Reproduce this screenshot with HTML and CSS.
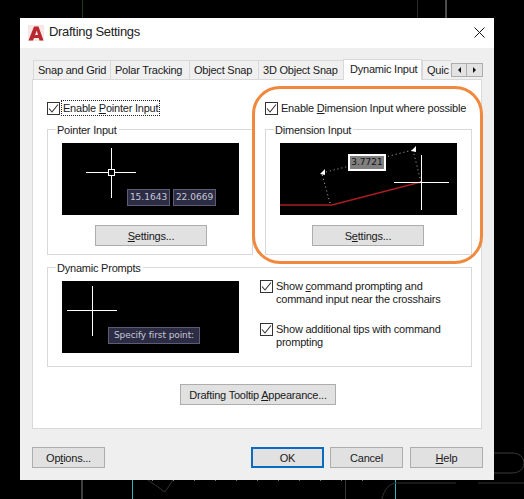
FILE: index.html
```html
<!DOCTYPE html>
<html lang="en">
<head>
    <meta charset="UTF-8">
    <meta name="viewport" content="width=device-width, initial-scale=1.0">
    <title>Drafting Settings</title>
    <link rel="stylesheet" href="styles.css">
</head>
<body>
    <!-- drawing behind the dialog -->
    <svg class="cad-lines" width="524" height="499" viewBox="0 0 524 499">
        <path d="M82.5 0V18" stroke="#1c3a1c" fill="none"/>
        <path d="M417.5 0V18" stroke="#2a2a2a" fill="none"/>
        <path d="M446 0V18" stroke="#666" stroke-width="1.5" fill="none"/>
        <path d="M82 480V499" stroke="#555" stroke-width="1.5" fill="none"/>
        <path d="M132.5 480V499" stroke="#2fb5b5" fill="none"/>
        <path d="M345.5 480V499" stroke="#333" fill="none"/>
        <path d="M395.5 480V499" stroke="#2fb5b5" fill="none"/>
        <path d="M148 480L165 492L173 480" stroke="#333" fill="none"/>
        <path d="M152 480.5H383" stroke="#777" stroke-dasharray="1 20" fill="none"/>
        <path d="M382 499C384 490 389 483 397 483H456M478 483H524" stroke="#333" fill="none"/>
        <path d="M494 453H512C519 453 524 457 524 463C524 469 519 473 512 473H494" stroke="#3a3a3a" fill="none"/>
    </svg>

    <div class="dialog">
        <div class="title-bar">
            <svg class="app-logo" width="16" height="16" viewBox="0 0 16 16">
                <rect width="16" height="16" fill="#f6e6e6"/>
                <path fill-rule="evenodd" d="M0.5 15.5L6 1.5H10.5L15.5 15.5H11.5L10.8 13H6L5 15.5ZM7 10H10L8.8 5.5Z" fill="#b8282e"/>
            </svg>
            <span class="title-text">Drafting Settings</span>
            <svg class="close-x" width="11" height="11" viewBox="0 0 11 11">
                <path d="M0.5 0.5L10.5 10.5M10.5 0.5L0.5 10.5" stroke="#111" fill="none"/>
            </svg>
        </div>

        <div class="tabs">
            <div class="tab tab-snap">Snap and Grid</div>
            <div class="tab tab-polar">Polar Tracking</div>
            <div class="tab tab-object">Object Snap</div>
            <div class="tab tab-3d">3D Object Snap</div>
            <div class="tab tab-dynamic active">Dynamic Input</div>
            <div class="tab tab-quick">Quic</div>
            <div class="tab-scroll">
                <div class="scroll-btn"><span class="arrow-left"></span></div>
                <div class="scroll-btn"><span class="arrow-right"></span></div>
            </div>
        </div>

        <div class="panel">
            <div class="top-row">
                <div class="column column-left">
                    <div class="check-row">
                        <span class="checkbox"><svg width="11" height="11" viewBox="0 0 11 11"><path d="M1 5.5L4 9L10 1.5" stroke="#333" stroke-width="1.1" fill="none"/></svg></span>
                        <span class="focus-label">Enable <u>P</u>ointer Input</span>
                    </div>
                    <div class="group group-pointer">
                        <span class="group-title">Pointer Input</span>
                        <div class="preview">
                            <svg width="177" height="72" viewBox="0 0 177 72">
                                <path d="M49.5 5V55M24 29.5H74" stroke="#fff" fill="none"/>
                                <rect x="46.5" y="26.5" width="6" height="6" fill="#000" stroke="#fff"/>
                            </svg>
                            <span class="coord coord-x">15.1643</span>
                            <span class="coord coord-y">22.0669</span>
                        </div>
                        <div class="btn btn-settings"><span><u>S</u>ettings...</span></div>
                    </div>
                </div>
                <div class="column column-right">
                    <div class="check-row">
                        <span class="checkbox"><svg width="11" height="11" viewBox="0 0 11 11"><path d="M1 5.5L4 9L10 1.5" stroke="#333" stroke-width="1.1" fill="none"/></svg></span>
                        <span class="plain-label">Enable <u>D</u>imension Input where possible</span>
                    </div>
                    <div class="group group-dimension">
                        <span class="group-title">Dimension Input</span>
                        <div class="preview">
                            <svg width="177" height="72" viewBox="0 0 177 72">
                                <path d="M0 62H52L141 39" stroke="#a81c22" stroke-width="1.5" fill="none"/>
                                <path d="M50 60L42 31M42 30L133 7M133 7L141 39" stroke="#bbb" stroke-dasharray="1 3" fill="none"/>
                                <path d="M40 31L45 26V32Z M131 8L136 3V9Z" fill="#fff"/>
                                <path d="M141.5 12V67M114 39.5H169" stroke="#fff" fill="none"/>
                            </svg>
                            <span class="dim-value">3.7721</span>
                        </div>
                        <div class="btn btn-settings"><span>S<u>e</u>ttings...</span></div>
                    </div>
                </div>
            </div>

            <div class="group group-prompts">
                <span class="group-title">Dynamic Prompts</span>
                <div class="preview">
                    <svg width="177" height="72" viewBox="0 0 177 72">
                        <path d="M30.5 5V55M5 29.5H55" stroke="#fff" fill="none"/>
                    </svg>
                    <span class="prompt-tip">Specify first point:</span>
                </div>
                <div class="prompt-options">
                    <div class="check-row top">
                        <span class="checkbox"><svg width="11" height="11" viewBox="0 0 11 11"><path d="M1 5.5L4 9L10 1.5" stroke="#333" stroke-width="1.1" fill="none"/></svg></span>
                        <span class="plain-label">Show <u>c</u>ommand prompting and<br>command input near the crosshairs</span>
                    </div>
                    <div class="check-row top">
                        <span class="checkbox"><svg width="11" height="11" viewBox="0 0 11 11"><path d="M1 5.5L4 9L10 1.5" stroke="#333" stroke-width="1.1" fill="none"/></svg></span>
                        <span class="plain-label">Show additional tips with command<br>prompting</span>
                    </div>
                </div>
            </div>

            <div class="tooltip-row">
                <div class="btn btn-tooltip"><span>Drafting Tooltip <u>A</u>ppearance...</span></div>
            </div>
        </div>

        <div class="footer">
            <div class="btn btn-footer"><span>Op<u>t</u>ions...</span></div>
            <div class="footer-right">
                <div class="btn btn-footer btn-default"><span>OK</span></div>
                <div class="btn btn-footer"><span>Cancel</span></div>
                <div class="btn btn-footer"><span><u>H</u>elp</span></div>
            </div>
        </div>

        <div class="highlight"></div>
    </div>
</body>
</html>
```

FILE: styles.css
```css
* {
    box-sizing: border-box;
}

body {
    margin: 0;
    width: 524px;
    height: 499px;
    padding: 18px 0 0 20px;
    background-color: #000;
    color: #1a1a1a;
    font-family: "Liberation Sans", Arial, sans-serif;
    font-size: 11px;
    letter-spacing: -0.22px;
    line-height: 14px;
    overflow: hidden;
    position: relative;
}

u {
    text-underline-offset: 1px;
}

.cad-lines {
    position: absolute;
    left: 0;
    top: 0;
}

.dialog {
    position: relative;
    width: 474px;
    height: 462px;
    background: #efefef;
    display: flex;
    flex-direction: column;
}

.title-bar {
    height: 30px;
    background: #fff;
    display: flex;
    align-items: center;
    padding: 0 9px 0 8px;
}

.app-logo {
    margin-right: 5px;
}

.title-text {
    font-size: 13px;
    letter-spacing: -0.3px;
    color: #222;
    margin-top: -2px;
}

.close-x {
    margin-left: auto;
    margin-top: -2px;
}

.tabs {
    display: flex;
    align-items: flex-end;
    height: 31px;
    padding-left: 13px;
    position: relative;
}

.tab {
    height: 19px;
    background: #f0f0f0;
    border: 1px solid #d9d9d9;
    border-bottom: none;
    border-right: none;
    padding-left: 4px;
    white-space: nowrap;
    overflow: hidden;
    line-height: 18px;
}

.tab-snap { width: 77px; }
.tab-polar { width: 79px; }
.tab-object { width: 69px; }
.tab-3d { width: 85px; }
.tab-quick { width: 29px; padding-left: 4px; }

.tab-dynamic {
    width: 79px;
}

.tab.active {
    height: 21px;
    margin-bottom: -1px;
    background: #fff;
    padding-left: 6px;
    border-right: 1px solid #d9d9d9;
    position: relative;
    z-index: 1;
}

.tab-scroll {
    display: flex;
    margin-bottom: 2px;
}

.scroll-btn {
    width: 16px;
    height: 14px;
    background: #e3e3e3;
    border: 1px solid #adadad;
    display: flex;
    align-items: center;
    justify-content: center;
}

.scroll-btn + .scroll-btn {
    margin-left: -1px;
    width: 17px;
}

.arrow-left,
.arrow-right {
    width: 0;
    height: 0;
    border-top: 3px solid transparent;
    border-bottom: 3px solid transparent;
}

.arrow-left { border-right: 3px solid #111; }
.arrow-right { border-left: 3px solid #111; }

.panel {
    margin-left: 12px;
    width: 450px;
    height: 350px;
    background: #fff;
    border: 1px solid #d9d9d9;
    padding: 20px 9px 0 14px;
}

.top-row {
    display: flex;
    height: 155px;
}

.column-left {
    width: 218px;
}

.column-right {
    width: 207px;
}

.check-row {
    display: flex;
    align-items: center;
    height: 16px;
}

.check-row.top {
    align-items: flex-start;
    height: auto;
    line-height: 13px;
}

.checkbox {
    flex: none;
    width: 13px;
    height: 13px;
    border: 1px solid #333;
    background: #fff;
    display: flex;
    align-items: center;
    justify-content: center;
}

.focus-label {
    margin-left: 2px;
    padding: 0 1px;
    outline: 1px dotted #222;
    outline-offset: 0;
    white-space: nowrap;
}

.plain-label {
    margin-left: 3px;
    white-space: nowrap;
}

.group {
    position: relative;
    border: 1px solid #d9d9d9;
    margin-top: 13px;
}

.group-title {
    position: absolute;
    left: 8px;
    top: -7px;
    background: #fff;
    padding: 0 2px 0 1px;
}

.group-pointer {
    width: 206px;
    height: 126px;
}

.group-dimension {
    width: 207px;
    height: 126px;
}

.group-prompts {
    width: 425px;
    height: 100px;
    margin-top: 12px;
    display: flex;
    align-items: flex-start;
}

.preview {
    position: relative;
    width: 177px;
    height: 72px;
    margin: 13px 0 0 14px;
    background: #000;
    flex: none;
}

.preview svg {
    display: block;
    overflow: hidden;
}

.coord,
.prompt-tip {
    position: absolute;
    background: #2c2c44;
    border: 1px solid #5c5c74;
    color: #c8c8d4;
    font-family: "DejaVu Sans", sans-serif;
    font-size: 9px;
    letter-spacing: 0;
    line-height: 15px;
    text-align: center;
}

.coord {
    top: 46px;
    height: 17px;
}

.coord-x { left: 65px; width: 43px; }
.coord-y { left: 111px; width: 43px; }

.prompt-tip {
    left: 46px;
    top: 46px;
    width: 92px;
    height: 17px;
    letter-spacing: -0.1px;
    white-space: nowrap;
}

.dim-value {
    position: absolute;
    left: 68px;
    top: 11px;
    width: 38px;
    height: 17px;
    background: #808080;
    border: 2px solid #fff;
    color: #111;
    font-family: "DejaVu Sans", sans-serif;
    font-size: 9px;
    letter-spacing: 0;
    line-height: 13px;
    text-align: center;
}

.btn {
    display: flex;
    align-items: center;
    justify-content: center;
    background: #e1e1e1;
    border: 1px solid #adadad;
    height: 21px;
    white-space: nowrap;
}

.btn-settings {
    width: 112px;
    margin-top: 10px;
}

.group-pointer .btn-settings { margin-left: 47px; }
.group-dimension .btn-settings { margin-left: 46px; }

.prompt-options {
    margin: 12px 0 0 21px;
    display: flex;
    flex-direction: column;
    gap: 17px;
}

.tooltip-row {
    display: flex;
    justify-content: center;
    margin-top: 17px;
    padding-right: 3px;
}

.btn-tooltip {
    width: 156px;
}

.footer {
    display: flex;
    justify-content: space-between;
    padding: 18px 11px 0 12px;
}

.footer-right {
    display: flex;
    gap: 6px;
}

.btn-footer {
    width: 73px;
}

.footer-right .btn-footer:last-child {
    margin-left: 1px;
}

.btn-default {
    border: 2px solid #0a6cc0;
}

/* orange annotation drawn over the screenshot */
.highlight {
    position: absolute;
    left: 232px;
    top: 68px;
    width: 231px;
    height: 178px;
    border: 3px solid #f0883e;
    border-radius: 28px;
    pointer-events: none;
}
```
